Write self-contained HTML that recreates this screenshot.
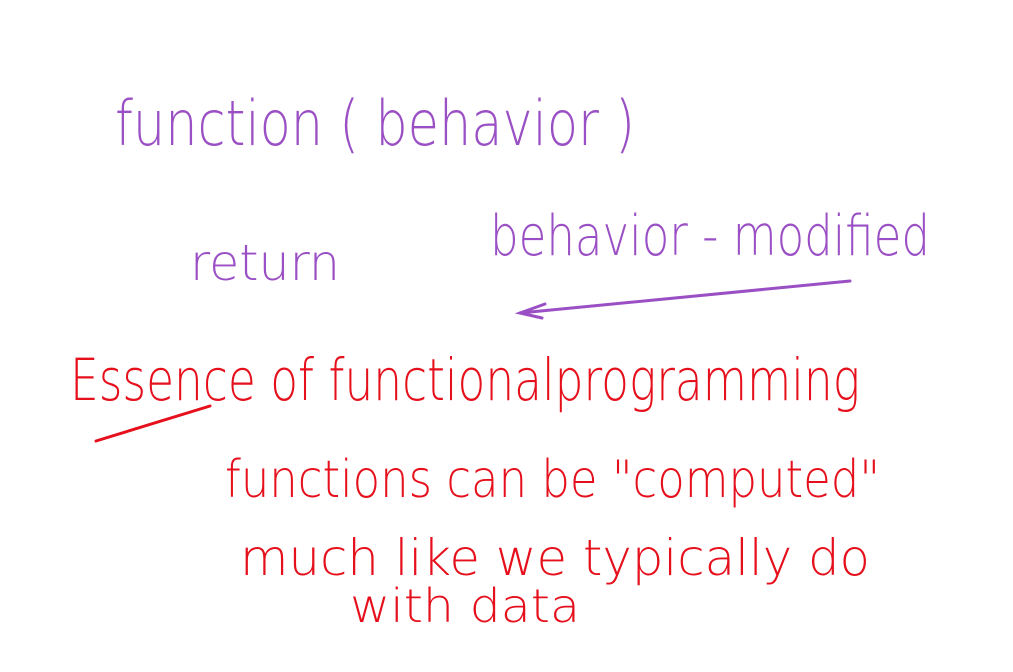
<!DOCTYPE html>
<html><head><meta charset="utf-8"><style>
html,body{margin:0;padding:0;background:#fff;width:1013px;height:672px;overflow:hidden}
svg{display:block}
text{font-family:"DejaVu Sans","Liberation Sans",sans-serif;font-weight:200}
</style></head><body>
<svg width="1013" height="672" viewBox="0 0 1013 672" xmlns="http://www.w3.org/2000/svg">
<g fill="#9a4fc4">
<text x="115" y="145" font-size="62" textLength="520" lengthAdjust="spacingAndGlyphs">function ( behavior )</text>
<text x="190" y="280" font-size="50" textLength="150" lengthAdjust="spacingAndGlyphs">return</text>
<text x="490" y="255" font-size="56" textLength="440" lengthAdjust="spacingAndGlyphs">behavior - modified</text>
</g>
<g stroke="#9a4fc4" stroke-width="3" fill="none" stroke-linecap="round">
<path d="M520 313 L850 281"/>
<path d="M545 304 L520 313 L542 318"/>
</g>
<g fill="#e5101c">
<text x="70" y="400" font-size="58" textLength="790" lengthAdjust="spacingAndGlyphs">Essence of functionalprogramming</text>
<text x="225" y="497" font-size="52" textLength="655" lengthAdjust="spacingAndGlyphs">functions can be "computed"</text>
<text x="240" y="575" font-size="50" textLength="630" lengthAdjust="spacingAndGlyphs">much like we typically do</text>
<text x="350" y="622" font-size="46" textLength="230" lengthAdjust="spacingAndGlyphs">with data</text>
</g>
<path d="M96 441 L210 406" stroke="#e5101c" stroke-width="3" fill="none" stroke-linecap="round"/>
</svg>
</body></html>
